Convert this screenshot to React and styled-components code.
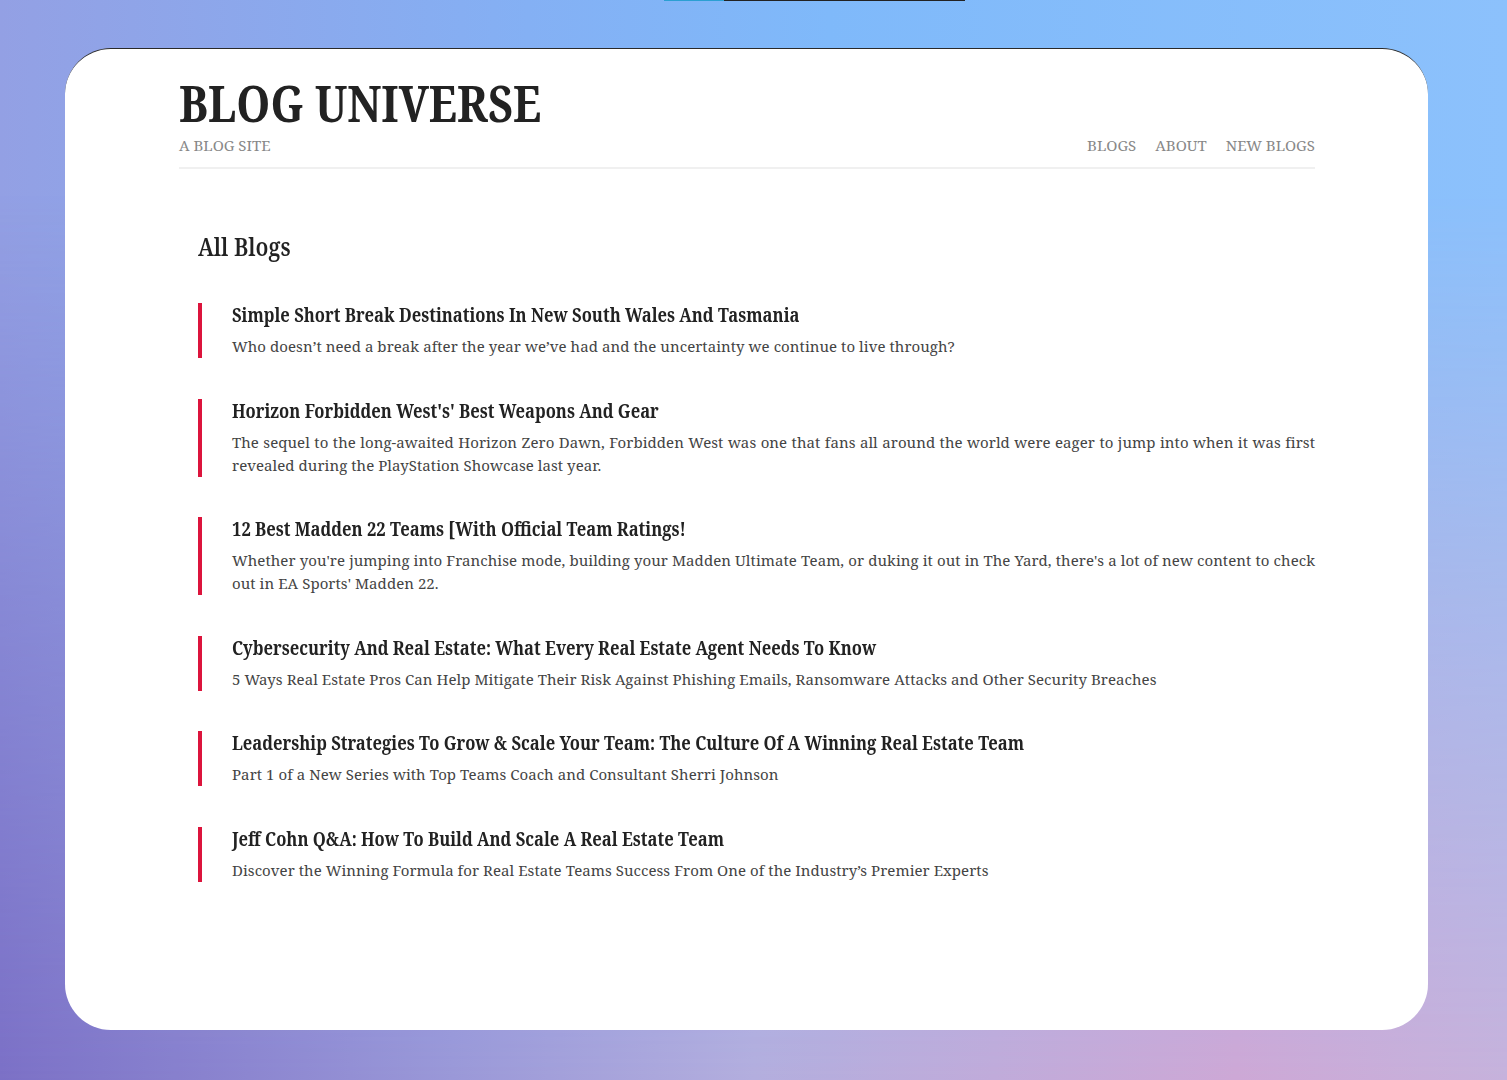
import React from "react";
import styled, { createGlobalStyle } from "styled-components";

const GlobalStyle = createGlobalStyle`
  html, body {
    margin: 0;
    padding: 0;
  }
  body {
    width: 1507px;
    height: 1080px;
    overflow: hidden;
    font-family: "Noto Serif", "DejaVu Serif", "Liberation Serif", serif;
  }
`;

const Page = styled.div`
  position: relative;
  width: 1507px;
  height: 1080px;
  box-sizing: border-box;
  padding: 48px 79px 50px 65px;
  background: linear-gradient(90deg, #93a0e4 0%, #84b0f4 35%, #7fb9fa 55%, #8cc1fc 100%);
  isolation: isolate;

  // lower half fades into the purple / pink band
  &::before {
    content: "";
    position: absolute;
    inset: 0;
    z-index: -1;
    background: linear-gradient(90deg, #7b70c6 0%, #9a98d8 30%, #b3aede 50%, #cda8d6 82%, #c6b2dc 100%);
    -webkit-mask-image: linear-gradient(180deg, transparent 18%, rgba(0, 0, 0, 0.55) 60%, #000 100%);
    mask-image: linear-gradient(180deg, transparent 18%, rgba(0, 0, 0, 0.55) 60%, #000 100%);
  }
`;

// thin scroll indicator at the very top of the window
const TopTrack = styled.div`
  position: absolute;
  top: 0;
  left: 664px;
  width: 301px;
  height: 1px;
  display: flex;
`;

const TopSegment = styled.div`
  height: 1px;
  width: ${(props) => props.$width};
  background: ${(props) => props.$color};
`;

const Card = styled.div`
  position: relative;
  height: 100%;
  box-sizing: border-box;
  background: #fff;
  border-radius: 46px;
  border-top: 1px solid #2a2a2a;
  padding: 25px 113px 0 114px;
`;

const Header = styled.header`
  display: flex;
  justify-content: space-between;
  align-items: flex-end;
  padding-bottom: 12px;
  border-bottom: 2px solid #f0f0f0;
`;

const Brand = styled.div`
  display: flex;
  flex-direction: column;
`;

// headings use a narrow cut of the serif, squeezed horizontally
const Narrow = styled.span`
  display: inline-block;
  white-space: nowrap;
  transform: scaleX(${(props) => props.$scale || 0.86});
  transform-origin: left center;
`;

const Title = styled.h1`
  margin: 0;
  font-size: 50px;
  line-height: 58px;
  font-weight: 700;
  color: #222;
`;

const Tagline = styled.div`
  margin-top: 3px;
  font-size: 15px;
  line-height: 20px;
  color: #888;
`;

const Nav = styled.nav`
  display: flex;
  gap: 19px;
`;

const NavLink = styled.a`
  font-size: 15px;
  line-height: 20px;
  color: #888;
  text-decoration: none;
  cursor: pointer;
`;

const Main = styled.main`
  padding: 61px 0 0 19px;
`;

const Heading = styled.h2`
  margin: 0 0 41px;
  font-size: 26px;
  line-height: 32px;
  font-weight: 600;
  color: #222;
`;

const List = styled.div`
  display: flex;
  flex-direction: column;
  gap: 40.5px;
`;

const Item = styled.article`
  border-left: 4px solid #dc143c;
  padding-left: 30px;
`;

const ItemTitle = styled.h3`
  margin: 0 0 8px;
  font-size: 20px;
  line-height: 24px;
  font-weight: 700;
  color: #222;
`;

const ItemText = styled.p`
  margin: 0;
  font-size: 15px;
  line-height: 23px;
  letter-spacing: 0.06px;
  text-align: justify;
  color: #444;
`;

const blogs = [
  {
    title: "Simple Short Break Destinations In New South Wales And Tasmania",
    text: "Who doesn\u2019t need a break after the year we\u2019ve had and the uncertainty we continue to live through?",
  },
  {
    title: "Horizon Forbidden West's' Best Weapons And Gear",
    text: "The sequel to the long-awaited Horizon Zero Dawn, Forbidden West was one that fans all around the world were eager to jump into when it was first revealed during the PlayStation Showcase last year.",
  },
  {
    title: "12 Best Madden 22 Teams [With Official Team Ratings!",
    text: "Whether you're jumping into Franchise mode, building your Madden Ultimate Team, or duking it out in The Yard, there's a lot of new content to check out in EA Sports' Madden 22.",
  },
  {
    title: "Cybersecurity And Real Estate: What Every Real Estate Agent Needs To Know",
    text: "5 Ways Real Estate Pros Can Help Mitigate Their Risk Against Phishing Emails, Ransomware Attacks and Other Security Breaches",
  },
  {
    title: "Leadership Strategies To Grow & Scale Your Team: The Culture Of A Winning Real Estate Team",
    text: "Part 1 of a New Series with Top Teams Coach and Consultant Sherri Johnson",
  },
  {
    title: "Jeff Cohn Q&A: How To Build And Scale A Real Estate Team",
    text: "Discover the Winning Formula for Real Estate Teams Success From One of the Industry\u2019s Premier Experts",
  },
];

const App = () => {
  return (
    <>
      <GlobalStyle />
      <Page>
        <TopTrack>
          <TopSegment $width="60px" $color="#2b9fd2" />
          <TopSegment $width="241px" $color="#222" />
        </TopTrack>
        <Card>
          <Header>
            <Brand>
              <Title>
                <Narrow $scale={0.865}>BLOG UNIVERSE</Narrow>
              </Title>
              <Tagline>A BLOG SITE</Tagline>
            </Brand>
            <Nav>
              <NavLink>BLOGS</NavLink>
              <NavLink>ABOUT</NavLink>
              <NavLink>NEW BLOGS</NavLink>
            </Nav>
          </Header>
          <Main>
            <Heading>
              <Narrow $scale={0.83}>All Blogs</Narrow>
            </Heading>
            <List>
              {blogs.map((blog, idx) => (
                <Item key={idx}>
                  <ItemTitle>
                    <Narrow $scale={0.83}>{blog.title}</Narrow>
                  </ItemTitle>
                  <ItemText>{blog.text}</ItemText>
                </Item>
              ))}
            </List>
          </Main>
        </Card>
      </Page>
    </>
  );
};

export default App;
